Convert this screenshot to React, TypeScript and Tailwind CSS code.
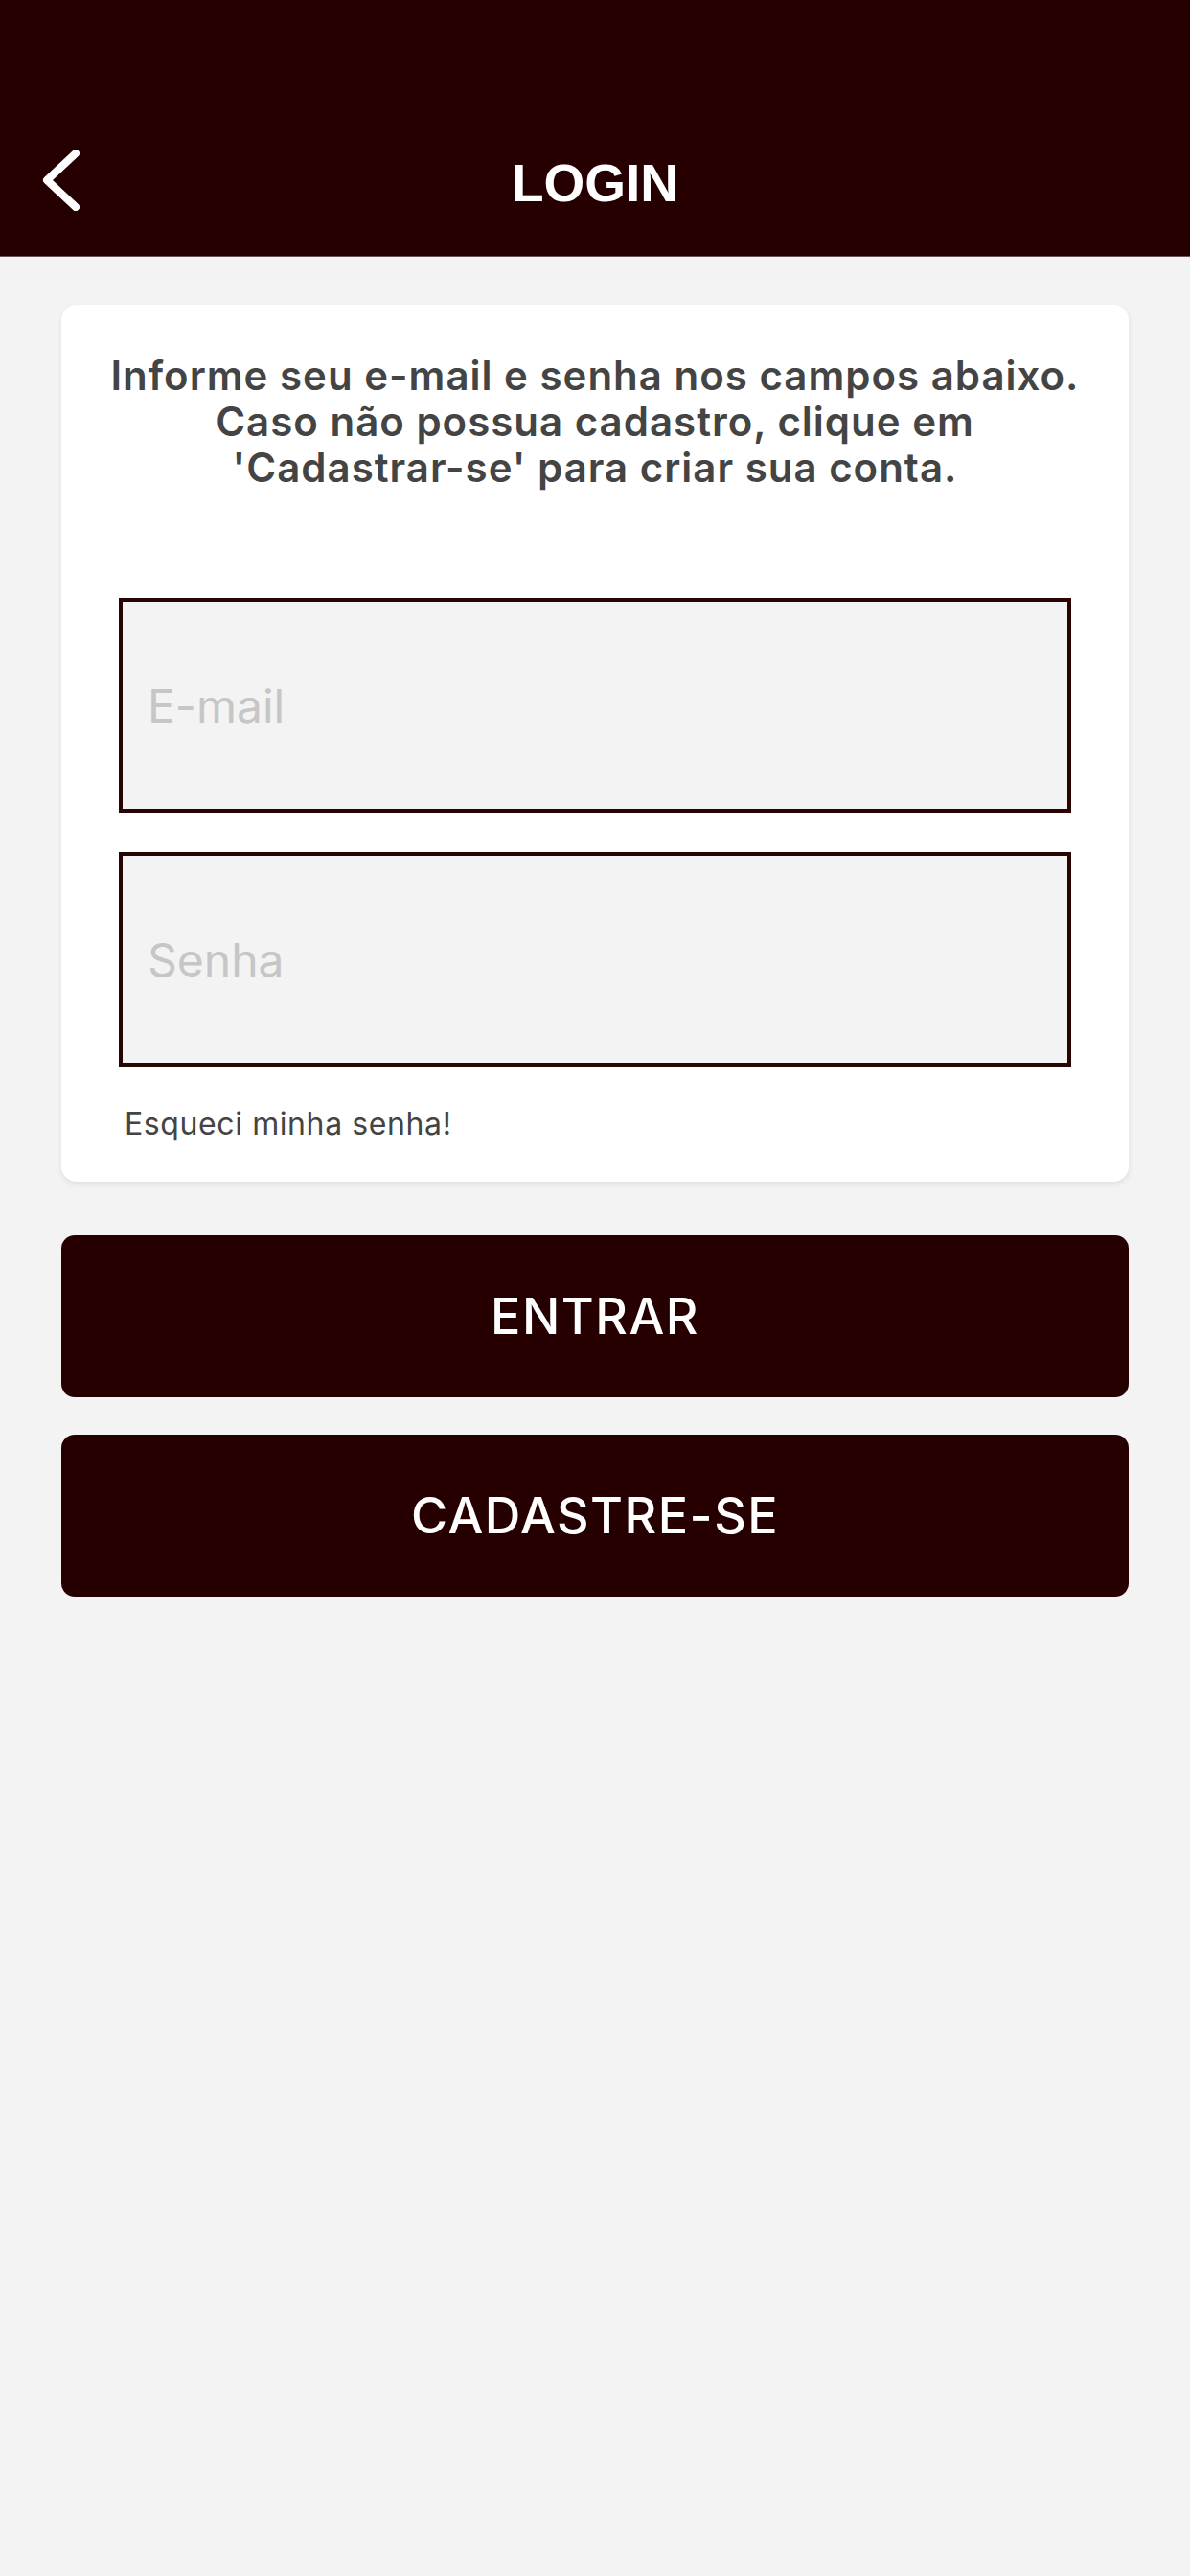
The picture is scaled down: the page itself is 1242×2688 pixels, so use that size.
export default function App() {
  return (
    <div className="flex min-h-[2688px] w-full flex-col bg-[#f3f3f3] font-['Inter',sans-serif]">
      <header className="border-b border-[#6d5555] bg-[#260000] pt-[150px] pb-[35px]">
        <div className="grid h-[82px] grid-cols-[1fr_auto_1fr] items-center">
          <button type="button" className="flex h-full w-[120px] items-center pb-[6px] pl-[42px]" aria-label="Voltar">
            <svg width="44" height="64" viewBox="0 0 44 64" fill="none">
              <path
                d="M37 4 L7 32 L37 60"
                stroke="white"
                strokeWidth="8"
                strokeLinecap="round"
                strokeLinejoin="round"
              />
            </svg>
          </button>
          <h1 className="font-['Liberation_Sans',sans-serif] text-[55px] font-bold text-white">LOGIN</h1>
          <div />
        </div>
      </header>

      <main className="flex flex-col px-[64px] pt-[50px]">
        <section className="rounded-[16px] bg-white px-[56px] pt-[50px] pb-[36px] shadow-[0_3px_6px_rgba(0,0,0,0.08)]">
          <p className="-mx-[20px] text-center text-[42px] leading-[48px] font-semibold tracking-[1px] whitespace-nowrap text-[#444444]">
            Informe seu e-mail e senha nos campos abaixo.
            <br />
            Caso não possua cadastro, clique em
            <br />
            'Cadastrar-se' para criar sua conta.
          </p>

          <div className="mt-[112px] flex flex-col gap-[41px] px-[4px]">
            <input
              type="email"
              placeholder="E-mail"
              className="h-[224px] w-full border-4 border-[#2a0303] bg-[#f3f3f3] px-[26px] text-[48px] text-[#333] outline-none placeholder:text-[#c6c6c6]"
            />
            <input
              type="password"
              placeholder="Senha"
              className="h-[224px] w-full border-4 border-[#2a0303] bg-[#f3f3f3] px-[26px] text-[48px] text-[#333] outline-none placeholder:text-[#c6c6c6]"
            />
          </div>

          <button type="button" className="mt-[36px] pl-[10px] text-[32px] font-normal tracking-[0.6px] text-[#444444]">
            Esqueci minha senha!
          </button>
        </section>

        <button
          type="button"
          className="mt-[56px] h-[169px] rounded-[14px] bg-[#260000] text-[52px] font-medium tracking-[1.5px] text-white"
        >
          ENTRAR
        </button>
        <button
          type="button"
          className="mt-[39px] h-[169px] rounded-[14px] bg-[#260000] text-[52px] font-medium tracking-[1.5px] text-white"
        >
          CADASTRE-SE
        </button>
      </main>
    </div>
  );
}
